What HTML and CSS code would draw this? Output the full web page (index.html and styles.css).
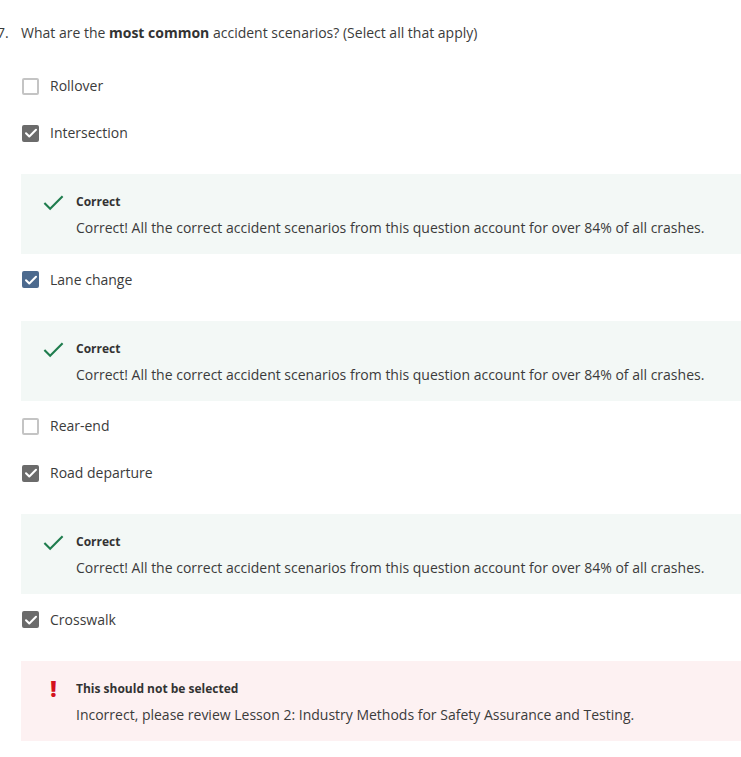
FILE: index.html
```html
<!DOCTYPE html>
<html>
<head>
<meta charset="utf-8">
<link rel="stylesheet" href="styles.css">
</head>
<body>
<div class="question">
  <div class="q-head"><span class="q-num">7.</span><span class="q-text">What are the <b>most common</b> accident scenarios? (Select all that apply)</span></div>
  <div class="options">
    <div class="opt"><span class="cb"></span><span>Rollover</span></div>
    <div class="opt"><span class="cb checked"><svg viewBox="0 0 16 16"><path d="M3 8.2l3.3 3.3L13 4.8" fill="none" stroke="#fff" stroke-width="2" stroke-linecap="round" stroke-linejoin="round"/></svg></span><span>Intersection</span></div>
    <div class="fb ok">
      <svg class="fb-icon" viewBox="0 0 24 24"><path d="M2.5 12.5l6 6L21.5 5.5" fill="none" stroke="#1f7d4e" stroke-width="2.2"/></svg>
      <div class="fb-body"><div class="fb-title">Correct</div><div class="fb-text">Correct! All the correct accident scenarios from this question account for over 84% of all crashes.</div></div>
    </div>
    <div class="opt"><span class="cb checked blue"><svg viewBox="0 0 16 16"><path d="M3 8.2l3.3 3.3L13 4.8" fill="none" stroke="#fff" stroke-width="2" stroke-linecap="round" stroke-linejoin="round"/></svg></span><span>Lane change</span></div>
    <div class="fb ok">
      <svg class="fb-icon" viewBox="0 0 24 24"><path d="M2.5 12.5l6 6L21.5 5.5" fill="none" stroke="#1f7d4e" stroke-width="2.2"/></svg>
      <div class="fb-body"><div class="fb-title">Correct</div><div class="fb-text">Correct! All the correct accident scenarios from this question account for over 84% of all crashes.</div></div>
    </div>
    <div class="opt"><span class="cb"></span><span>Rear-end</span></div>
    <div class="opt"><span class="cb checked"><svg viewBox="0 0 16 16"><path d="M3 8.2l3.3 3.3L13 4.8" fill="none" stroke="#fff" stroke-width="2" stroke-linecap="round" stroke-linejoin="round"/></svg></span><span>Road departure</span></div>
    <div class="fb ok">
      <svg class="fb-icon" viewBox="0 0 24 24"><path d="M2.5 12.5l6 6L21.5 5.5" fill="none" stroke="#1f7d4e" stroke-width="2.2"/></svg>
      <div class="fb-body"><div class="fb-title">Correct</div><div class="fb-text">Correct! All the correct accident scenarios from this question account for over 84% of all crashes.</div></div>
    </div>
    <div class="opt"><span class="cb checked"><svg viewBox="0 0 16 16"><path d="M3 8.2l3.3 3.3L13 4.8" fill="none" stroke="#fff" stroke-width="2" stroke-linecap="round" stroke-linejoin="round"/></svg></span><span>Crosswalk</span></div>
    <div class="fb bad">
      <span class="fb-excl">!</span>
      <div class="fb-body"><div class="fb-title">This should not be selected</div><div class="fb-text">Incorrect, please review Lesson 2: Industry Methods for Safety Assurance and Testing.</div></div>
    </div>
  </div>
</div>
</body>
</html>
```

FILE: styles.css
```css
html, body {
  margin: 0;
  padding: 0;
  background: #fff;
  overflow: hidden;
}
body {
  font-family: "Open Sans", "Liberation Sans", sans-serif;
  font-size: 14px;
  color: #3b3b3b;
}
.question {
  padding-top: 21px;
}
.q-head {
  display: flex;
  line-height: 24px;
}
.q-num {
  width: 24px;
  margin-left: -3px;
  flex: none;
}
.q-text b {
  font-weight: 700;
  color: #333;
}
.options {
  margin-top: 15px;
  display: flex;
  flex-direction: column;
  padding-left: 21px;
}
.opt {
  display: flex;
  align-items: center;
  gap: 11px;
  padding: 14px 0 9px 1px;
  line-height: 24px;
}
.fb + .opt {
  padding-top: 13.5px;
}
.cb {
  width: 17px;
  height: 17px;
  box-sizing: border-box;
  border: 2px solid #c4c4c4;
  border-radius: 2px;
  flex: none;
  display: flex;
  align-items: center;
  justify-content: center;
}
.cb.checked {
  background: #6b6b6b;
  border-color: #6b6b6b;
}
.cb.checked.blue {
  background: #4c6a8e;
  border-color: #4c6a8e;
}
.cb svg {
  width: 16px;
  height: 16px;
  flex: none;
}
.fb {
  margin-top: 20px;
  margin-right: -40px;
  height: 80px;
  box-sizing: border-box;
  padding: 17px 20px 15px 21px;
  display: flex;
  gap: 11px;
}
.fb.ok {
  background: #f3f8f6;
}
.fb.bad {
  background: #fdf1f2;
}
.fb-icon {
  width: 23px;
  height: 23px;
  margin-top: 0;
  flex: none;
}
.fb-excl {
  width: 23px;
  text-align: center;
  flex: none;
  color: #d4111e;
  font-weight: 800;
  font-size: 22px;
  line-height: 22px;
  margin-top: -1px;
}
.fb-body {
  display: flex;
  flex-direction: column;
  gap: 4px;
}
.fb-title {
  font-size: 12px;
  font-weight: 700;
  line-height: 22px;
  color: #333;
}
.fb-text {
  line-height: 22px;
  color: #3b3b3b;
}
```
